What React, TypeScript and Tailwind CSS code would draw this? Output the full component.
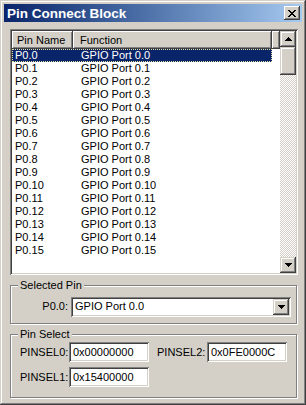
import React from 'react';

const pins = Array.from({ length: 16 }, (_, i) => ({ pin: `P0.${i}`, fn: `GPIO Port 0.${i}` }));

function UpArrow() {
  return (
    <svg width="7" height="4" viewBox="0 0 7 4"><path d="M3 0h1v1h1v1h1v1h1v1H0V3h1V2h1V1h1z" fill="#000" /></svg>
  );
}

function DownArrow() {
  return (
    <svg width="7" height="4" viewBox="0 0 7 4"><path d="M0 0h7v1H6v1H5v1H4v1H3V3H2V2H1V1H0z" fill="#000" /></svg>
  );
}

function HexBox({ value }: { value: string }) {
  return (
    <div className="w-[80px] h-[20px] bg-white px-[4px] flex items-center shadow-[inset_1px_1px_#808080,inset_-1px_-1px_#ffffff,inset_2px_2px_#404040,inset_-2px_-2px_#d4d0c8]">
      {value}
    </div>
  );
}

export default function App() {
  return (
    <div className="w-[306px] h-[405px] bg-[#d4d0c8] p-[4px] flex flex-col text-[11px] leading-[13px] text-black font-['Liberation_Sans',Arial,sans-serif] shadow-[inset_-1px_-1px_#404040,inset_1px_1px_#d4d0c8,inset_-2px_-2px_#808080,inset_2px_2px_#ffffff]">
      {/* Title bar */}
      <div className="h-[18px] flex items-center pl-[3px] pr-[2px] bg-gradient-to-r from-[#0a246a] to-[#a6caf0]">
        <span className="text-white font-bold text-[13.5px]">Pin Connect Block</span>
        <div className="ml-auto w-[16px] h-[14px] bg-[#d4d0c8] flex items-center justify-center shadow-[inset_-1px_-1px_#404040,inset_1px_1px_#ffffff,inset_-2px_-2px_#808080]">
          <svg width="8" height="7" viewBox="0 0 8 7">
            <path d="M0 0h2v1h1v1h2V1h1V0h2v1H7v1H6v1H5v1h1v1h1v1h1v1H6V6H5V5H3v1H2v1H0V6h1V5h1V4h1V3H2V2H1V1H0z" fill="#000" />
          </svg>
        </div>
      </div>

      <div className="pl-[6px] pr-[4px] pt-[7px] flex flex-col">
        {/* List */}
        <div className="w-[288px] h-[246px] bg-white p-[2px] flex shadow-[inset_1px_1px_#808080,inset_-1px_-1px_#ffffff,inset_2px_2px_#404040,inset_-2px_-2px_#d4d0c8]">
          <div className="flex-1 flex flex-col overflow-hidden">
            <div className="h-[18px] flex bg-[#d4d0c8]">
              <div className="w-[61px] pl-[5px] flex items-center shadow-[inset_-1px_-1px_#404040,inset_1px_1px_#ffffff,inset_-2px_-2px_#808080]">Pin Name</div>
              <div className="w-[199px] pl-[7px] flex items-center shadow-[inset_-1px_-1px_#404040,inset_1px_1px_#ffffff,inset_-2px_-2px_#808080]">Function</div>
              <div className="flex-1 shadow-[inset_-1px_-1px_#404040,inset_1px_1px_#ffffff,inset_-2px_-2px_#808080]" />
            </div>
            {pins.map((p, i) => (
              <div
                key={p.pin}
                className={`w-[260px] h-[13px] flex items-center whitespace-nowrap ${
                  i === 0 ? 'bg-[#0a246a] text-white outline-1 outline-dotted outline-[#e8e0a0] -outline-offset-1' : ''
                }`}
              >
                <span className="w-[69px] pl-[3px]">{p.pin}</span>
                <span>{p.fn}</span>
              </div>
            ))}
          </div>
          <div className="w-[16px] flex flex-col">
            <div className="h-[16px] bg-[#d4d0c8] flex items-center justify-center shadow-[inset_-1px_-1px_#404040,inset_1px_1px_#d4d0c8,inset_-2px_-2px_#808080,inset_2px_2px_#ffffff]">
              <UpArrow />
            </div>
            <div className="h-[28px] bg-[#d4d0c8] shadow-[inset_-1px_-1px_#404040,inset_1px_1px_#d4d0c8,inset_-2px_-2px_#808080,inset_2px_2px_#ffffff]" />
            <div className="flex-1 bg-[image:repeating-conic-gradient(#ffffff_0%_25%,#d4d0c8_0%_50%)] bg-[length:2px_2px]" />
            <div className="h-[16px] bg-[#d4d0c8] flex items-center justify-center shadow-[inset_-1px_-1px_#404040,inset_1px_1px_#d4d0c8,inset_-2px_-2px_#808080,inset_2px_2px_#ffffff]">
              <DownArrow />
            </div>
          </div>
        </div>

        {/* Selected Pin */}
        <div className="relative mt-[10px] w-[287px] h-[39px] border border-[#808080] shadow-[inset_1px_1px_#ffffff,1px_1px_#ffffff] flex items-center pl-[25px] pt-[4px]">
          <span className="absolute -top-[7px] left-[7px] px-[2px] bg-[#d4d0c8]">Selected Pin</span>
          <span className="w-[32px] text-right mr-[3px]">P0.0:</span>
          <div className="w-[220px] h-[20px] bg-white flex items-center pl-[4px] pr-[2px] shadow-[inset_1px_1px_#808080,inset_-1px_-1px_#ffffff,inset_2px_2px_#404040,inset_-2px_-2px_#d4d0c8]">
            <span className="flex-1">GPIO Port 0.0</span>
            <div className="w-[16px] h-[16px] bg-[#d4d0c8] flex items-center justify-center shadow-[inset_-1px_-1px_#404040,inset_1px_1px_#d4d0c8,inset_-2px_-2px_#808080,inset_2px_2px_#ffffff]">
              <DownArrow />
            </div>
          </div>
        </div>

        {/* Pin Select */}
        <div className="relative mt-[10px] w-[287px] h-[64px] border border-[#808080] shadow-[inset_1px_1px_#ffffff,1px_1px_#ffffff] pl-[9px] pt-[7px] flex flex-col gap-[5px]">
          <span className="absolute -top-[7px] left-[7px] px-[2px] bg-[#d4d0c8]">Pin Select</span>
          <div className="flex items-center">
            <span className="w-[49px]">PINSEL0:</span>
            <HexBox value="0x00000000" />
            <span className="ml-[8px] w-[50px]">PINSEL2:</span>
            <HexBox value="0x0FE0000C" />
          </div>
          <div className="flex items-center">
            <span className="w-[49px]">PINSEL1:</span>
            <HexBox value="0x15400000" />
          </div>
        </div>
      </div>
    </div>
  );
}
